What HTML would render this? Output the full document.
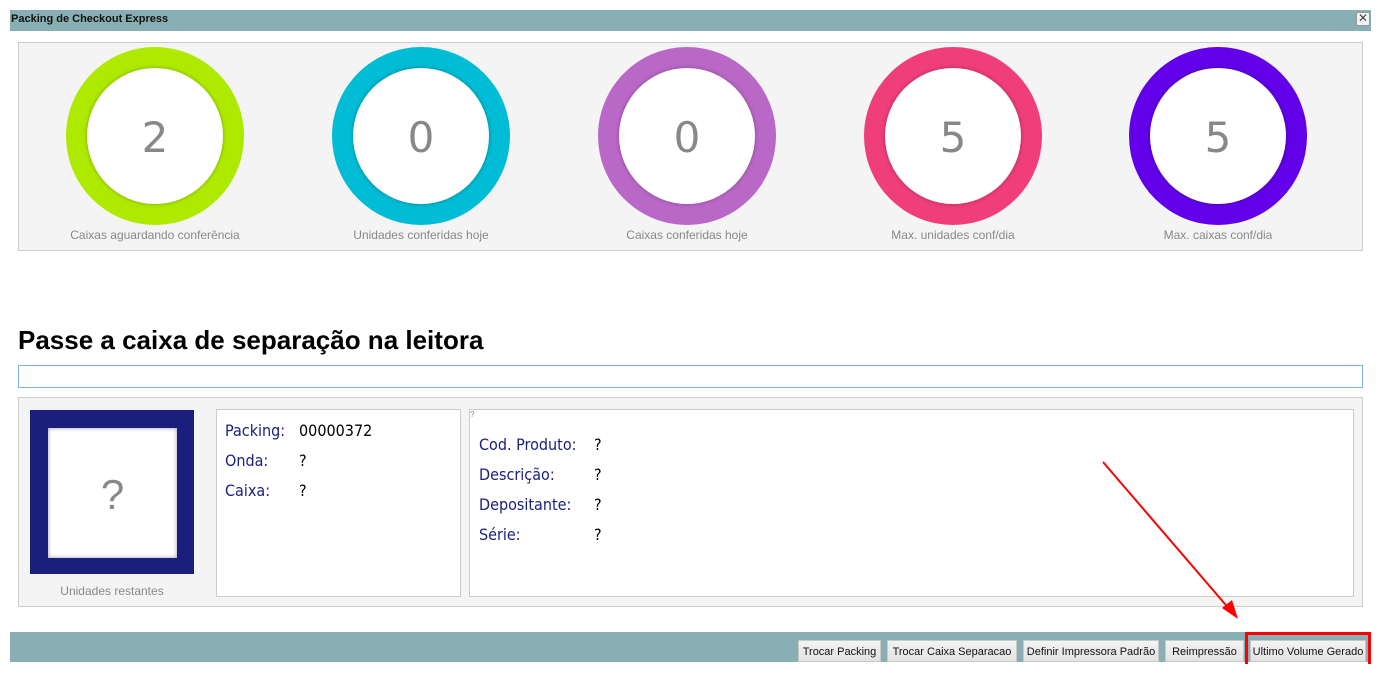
<!DOCTYPE html>
<html><head><meta charset="utf-8"><style>
*{box-sizing:border-box;margin:0;padding:0}
body{width:1383px;height:673px;background:#fff;position:relative;overflow:hidden;font-family:"Liberation Sans",sans-serif}
.abs{position:absolute}
.bar{background:#88afb3;left:10px;width:1361px}
.title{font-family:"Liberation Sans",sans-serif;font-weight:bold;font-size:11px;color:#111;left:11px;top:13px}
.close{left:1356px;top:12px;width:14px;height:14px;background:#f4f4f4;border:1px solid #999;border-radius:2px;font-size:12px;line-height:11px;text-align:center;color:#444;font-family:"Liberation Sans",sans-serif}
.panel{background:#f4f4f4;border:1px solid #ccc}
.ring{width:178px;height:178px;border-radius:50%;top:47px}
.ring .in{position:absolute;left:21px;top:21px;width:136px;height:136px;border-radius:50%;background:#fff;box-shadow:0 0 4px rgba(0,0,0,.3);text-align:center;line-height:140px;font-size:42px;color:#888;font-family:"DejaVu Sans",sans-serif}
.lbl{top:228px;width:260px;text-align:center;font-size:12px;color:#888;font-family:"Liberation Sans",sans-serif}
.row{font-size:16px;color:#000;font-family:"DejaVu Sans Condensed","DejaVu Sans",sans-serif}
.row b{font-weight:normal;color:#1a1f7e;display:inline-block}
.btn{top:640px;height:22px;background:linear-gradient(#f3f3f3,#e2e2e2);border:1px solid #c8c8c8;font-family:"Liberation Sans",sans-serif;font-size:11px;line-height:22px;text-align:center;color:#111}
</style></head><body>
<div class="abs bar" style="top:10px;height:21px"></div>
<div class="abs title">Packing de Checkout Express</div>
<div class="abs close">✕</div>

<div class="abs panel" style="left:18px;top:42px;width:1345px;height:209px"></div>
<div class="abs ring" style="left:66px;background:#aeea00"><div class="in">2</div></div>
<div class="abs ring" style="left:332px;background:#00bcd4"><div class="in">0</div></div>
<div class="abs ring" style="left:598px;background:#ba68c8"><div class="in">0</div></div>
<div class="abs ring" style="left:864px;background:#ef3e7a"><div class="in">5</div></div>
<div class="abs ring" style="left:1129px;background:#6200ea"><div class="in">5</div></div>
<div class="abs lbl" style="left:25px">Caixas aguardando conferência</div>
<div class="abs lbl" style="left:291px">Unidades conferidas hoje</div>
<div class="abs lbl" style="left:557px">Caixas conferidas hoje</div>
<div class="abs lbl" style="left:823px">Max. unidades conf/dia</div>
<div class="abs lbl" style="left:1088px">Max. caixas conf/dia</div>

<div class="abs" style="left:18px;top:325px;font-size:26px;font-weight:bold;color:#000;font-family:'Liberation Sans',sans-serif">Passe a caixa de separação na leitora</div>
<div class="abs" style="left:18px;top:365px;width:1345px;height:23px;border:1px solid #7eb4ea"></div>

<div class="abs panel" style="left:18px;top:397px;width:1345px;height:210px"></div>
<div class="abs" style="left:30px;top:410px;width:164px;height:164px;background:#1a1f7e"></div>
<div class="abs" style="left:48px;top:428px;width:129px;height:130px;background:#fff;box-shadow:0 0 4px rgba(0,0,0,.4) inset;text-align:center;line-height:134px;font-size:42px;color:#888">?</div>
<div class="abs" style="left:30px;top:584px;width:164px;text-align:center;font-size:12px;color:#888">Unidades restantes</div>

<div class="abs" style="left:216px;top:409px;width:245px;height:188px;background:#fff;border:1px solid #ccc"></div>
<div class="abs row" style="left:225px;top:421px"><b style="width:74px">Packing:</b>00000372</div>
<div class="abs row" style="left:225px;top:451px"><b style="width:74px">Onda:</b>?</div>
<div class="abs row" style="left:225px;top:481px"><b style="width:74px">Caixa:</b>?</div>

<div class="abs" style="left:469px;top:409px;width:885px;height:188px;background:#fff;border:1px solid #ccc"></div>
<div class="abs" style="left:470px;top:410px;font-size:8px;color:#888">?</div>
<div class="abs row" style="left:479px;top:435px"><b style="width:115px">Cod. Produto:</b>?</div>
<div class="abs row" style="left:479px;top:465px"><b style="width:115px">Descrição:</b>?</div>
<div class="abs row" style="left:479px;top:495px"><b style="width:115px">Depositante:</b>?</div>
<div class="abs row" style="left:479px;top:525px"><b style="width:115px">Série:</b>?</div>

<div class="abs bar" style="top:632px;height:30px"></div>
<div class="abs btn" style="left:798px;width:83px">Trocar Packing</div>
<div class="abs btn" style="left:887px;width:130px">Trocar Caixa Separacao</div>
<div class="abs btn" style="left:1023px;width:136px">Definir Impressora Padrão</div>
<div class="abs btn" style="left:1165px;width:79px">Reimpressão</div>
<div class="abs btn" style="left:1250px;width:116px">Ultimo Volume Gerado</div>
<div class="abs" style="left:1245px;top:632px;width:126px;height:32px;border:3px solid #f00;border-bottom:none"></div>

<svg class="abs" style="left:0;top:0" width="1383" height="673">
<line x1="1103" y1="462" x2="1231" y2="611" stroke="#f00" stroke-width="2"/>
<polygon points="1238,619 1222,608 1232,600" fill="#f00"/>
</svg>
</body></html>
